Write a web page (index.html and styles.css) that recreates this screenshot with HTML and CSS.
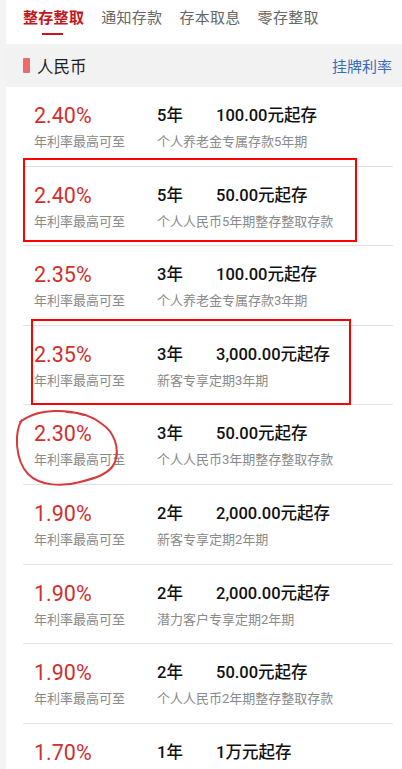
FILE: index.html
```html
<!DOCTYPE html>
<html lang="zh-CN">
<head>
<meta charset="utf-8">
<title>整存整取</title>
<link rel="stylesheet" href="styles.css">
</head>
<body>
<div class="page">
  <nav class="tabs">
    <span class="tab active">整存整取</span>
    <span class="tab">通知存款</span>
    <span class="tab">存本取息</span>
    <span class="tab">零存整取</span>
  </nav>
  <div class="section-head">
    <div class="section-title"><span class="mark"></span>人民币</div>
    <a class="section-link">挂牌利率</a>
  </div>
  <ul class="list">
    <li class="row">
      <div class="rate">2.40%</div><div class="term">5年</div><div class="amount">100.00元起存</div>
      <div class="label">年利率最高可至</div><div class="desc">个人养老金专属存款5年期</div>
    </li>
    <li class="row">
      <div class="rate">2.40%</div><div class="term">5年</div><div class="amount">50.00元起存</div>
      <div class="label">年利率最高可至</div><div class="desc">个人人民币5年期整存整取存款</div>
    </li>
    <li class="row">
      <div class="rate">2.35%</div><div class="term">3年</div><div class="amount">100.00元起存</div>
      <div class="label">年利率最高可至</div><div class="desc">个人养老金专属存款3年期</div>
    </li>
    <li class="row">
      <div class="rate">2.35%</div><div class="term">3年</div><div class="amount">3,000.00元起存</div>
      <div class="label">年利率最高可至</div><div class="desc">新客专享定期3年期</div>
    </li>
    <li class="row">
      <div class="rate">2.30%</div><div class="term">3年</div><div class="amount">50.00元起存</div>
      <div class="label">年利率最高可至</div><div class="desc">个人人民币3年期整存整取存款</div>
    </li>
    <li class="row">
      <div class="rate">1.90%</div><div class="term">2年</div><div class="amount">2,000.00元起存</div>
      <div class="label">年利率最高可至</div><div class="desc">新客专享定期2年期</div>
    </li>
    <li class="row">
      <div class="rate">1.90%</div><div class="term">2年</div><div class="amount">2,000.00元起存</div>
      <div class="label">年利率最高可至</div><div class="desc">潜力客户专享定期2年期</div>
    </li>
    <li class="row">
      <div class="rate">1.90%</div><div class="term">2年</div><div class="amount">50.00元起存</div>
      <div class="label">年利率最高可至</div><div class="desc">个人人民币2年期整存整取存款</div>
    </li>
    <li class="row">
      <div class="rate">1.70%</div><div class="term">1年</div><div class="amount">1万元起存</div>
    </li>
  </ul>

  <div class="mark-box box-one"></div>
  <div class="mark-box box-two"></div>
  <svg class="mark-circle" width="140" height="100" viewBox="0 0 140 100">
    <path d="M84 15 C66 9, 42 9, 24 19 M20 22 C28 16, 36 13, 44 12 M22 20 C14 32, 15 60, 28 74 C40 86, 62 87, 80 82 C96 78, 110 74, 115 62 C120 48, 114 32, 102 24 C92 16, 80 12, 66 12" fill="none" stroke="#d8393b" stroke-width="2" stroke-linecap="round"/>
  </svg>
</div>
</body>
</html>
```

FILE: styles.css
```css
* { box-sizing: border-box; }
html, body { margin: 0; padding: 0; }
body {
  background: #f3f3f3;
  font-family: Roboto, "Noto Sans CJK SC", "Noto Sans", sans-serif;
  overflow: hidden;
}
.page {
  position: relative;
  margin-left: 6px;
  background: #fff;
  min-height: 769px;
}
.tabs {
  display: flex;
  gap: 17px;
  height: 44px;
  padding: 8px 0 0 17px;
  background: #fff;
}
.tab {
  position: relative;
  font-size: 15px;
  line-height: 20px;
  color: #666;
  letter-spacing: 0.3px;
}
.tab.active {
  color: #c4161c;
  font-weight: 700;
}
.tab.active::after {
  content: "";
  position: absolute;
  left: 19px;
  top: 25px;
  width: 21px;
  height: 2px;
  background: #c4161c;
}
.section-head {
  display: flex;
  align-items: center;
  justify-content: space-between;
  height: 43px;
  padding: 0 10px 0 17px;
  background: #f2f2f2;
}
.section-title {
  display: flex;
  align-items: center;
  gap: 7px;
  font-size: 16.5px;
  color: #1e1e1e;
}
.mark {
  width: 7px;
  height: 15px;
  border-radius: 1px;
  background: #ec6a6a;
}
.section-link {
  font-size: 15px;
  color: #3a6db5;
}
.list {
  list-style: none;
  margin: 0 9px 0 17px;
  padding: 0;
}
.row {
  display: grid;
  grid-template-columns: 123px 59px 1fr;
  grid-template-rows: 22px 18px;
  row-gap: 6px;
  height: 79.6px;
  padding: 18px 0 0 11px;
  border-bottom: 1px solid #e2e2e2;
  align-items: center;
}
.rate {
  font-size: 21.5px;
  line-height: 22px;
  color: #d0302c;
}
.term, .amount {
  font-size: 16.5px;
  line-height: 22px;
  font-weight: 500;
  color: #111;
}
.label {
  font-size: 13px;
  line-height: 18px;
  color: #8a8a8a;
}
.desc {
  grid-column: 2 / 4;
  font-size: 13px;
  line-height: 18px;
  color: #8a8a8a;
}
.mark-box {
  position: absolute;
  border: 2.5px solid #f00;
}
.box-one {
  left: 17px;
  top: 158px;
  width: 334px;
  height: 84px;
}
.box-two {
  left: 25px;
  top: 319px;
  width: 320px;
  height: 86px;
}
.mark-circle {
  position: absolute;
  left: -6px;
  top: 400px;
}
```
